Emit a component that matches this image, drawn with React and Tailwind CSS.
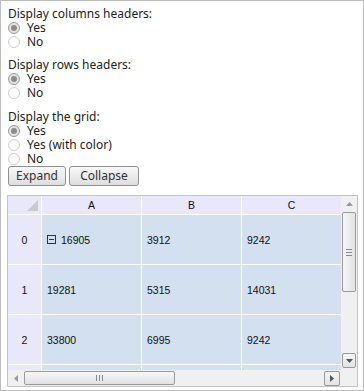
const groups = [
  { label: "Display columns headers:", options: ["Yes", "No"], mt: "" },
  { label: "Display rows headers:", options: ["Yes", "No"], mt: "mt-[9px]" },
  { label: "Display the grid:", options: ["Yes", "Yes (with color)", "No"], mt: "mt-[10px]" },
];

const rows = [
  { n: 0, a: "16905", b: "3912", c: "9242", toggle: true },
  { n: 1, a: "19281", b: "5315", c: "14031" },
  { n: 2, a: "33800", b: "6995", c: "9242" },
  { n: 3, a: "", b: "", c: "" },
];

function Radio({ checked, label }) {
  return (
    <div className="flex items-center h-[14px] leading-[14px]">
      {checked ? (
        <span className="w-[12px] h-[12px] rounded-full border border-[#9a9a9a] bg-[#e4e4e4] flex items-center justify-center">
          <span className="w-[6px] h-[6px] rounded-full bg-[#8c8c8c]" />
        </span>
      ) : (
        <span className="w-[12px] h-[12px] rounded-full border border-[#cfcfcf] bg-white" />
      )}
      <span className="ml-[7px]">{label}</span>
    </div>
  );
}

function Btn({ children, w }) {
  return (
    <button
      className={`${w} h-[20px] rounded-[3px] border border-[#8f8f8f] bg-gradient-to-b from-[#f8f8f8] to-[#dedede] text-[12px] text-[#333] leading-none`}
    >
      {children}
    </button>
  );
}

function Grip({ vertical }) {
  return vertical ? (
    <div className="flex flex-col gap-[2px]">
      <span className="w-[6px] h-px bg-[#8a8a8a]" />
      <span className="w-[6px] h-px bg-[#8a8a8a]" />
      <span className="w-[6px] h-px bg-[#8a8a8a]" />
    </div>
  ) : (
    <div className="flex gap-[2px]">
      <span className="h-[6px] w-px bg-[#8a8a8a]" />
      <span className="h-[6px] w-px bg-[#8a8a8a]" />
      <span className="h-[6px] w-px bg-[#8a8a8a]" />
    </div>
  );
}

function Cell({ children }) {
  return (
    <div className="w-[99px] h-full bg-[#d3e0ef] flex items-center pl-[5px] text-[#111]">
      {children}
    </div>
  );
}

export default function App() {
  return (
    <div
      className="w-[364px] h-[391px] border border-[#bdbdbd] bg-white overflow-hidden text-[12px] leading-[14px] text-[#222]"
      style={{ fontFamily: '"Noto Sans", "Open Sans", sans-serif' }}
    >
      <div className="pl-[7px] pt-[6px]">
        {groups.map((g) => (
          <div key={g.label} className={g.mt}>
            <div className="h-[14px] leading-[14px]">{g.label}</div>
            {g.options.map((o, i) => (
              <Radio key={o} checked={i === 0} label={o} />
            ))}
          </div>
        ))}
        <div className="flex gap-[3px]">
          <Btn w="w-[58px]">Expand</Btn>
          <Btn w="w-[70px]">Collapse</Btn>
        </div>
      </div>

      <div
        className="mt-[9px] ml-[6px] w-[351px] h-[192px] border border-[#c4c4c4] flex flex-col text-[10.5px] leading-[12px] overflow-hidden"
        style={{ fontFamily: '"Liberation Sans", Arial, sans-serif' }}
      >
        <div className="flex h-[174px]">
          <div className="w-[334px] flex flex-col gap-px overflow-hidden bg-white">
            <div className="flex gap-px h-[18px] shrink-0">
              <div className="w-[33px] h-full bg-[#e8e8fa] relative">
                <svg className="absolute right-[3px] bottom-[3px]" width="11" height="11" viewBox="0 0 11 11">
                  <polygon points="11,0 11,11 0,11" fill="#c9c9cf" />
                </svg>
              </div>
              {["A", "B", "C"].map((h) => (
                <div key={h} className="w-[99px] h-full bg-[#e8e8fa] flex items-center justify-center text-[#111]">
                  {h}
                </div>
              ))}
            </div>
            {rows.map((r) => (
              <div key={r.n} className="flex gap-px h-[49px] shrink-0">
                <div className="w-[33px] h-full bg-[#e8e8fa] flex items-center justify-center text-[#111]">
                  {r.n < 3 ? r.n : ""}
                </div>
                <Cell>
                  {r.toggle && (
                    <span className="w-[9px] h-[9px] border border-[#333] flex items-center justify-center mr-[5px]">
                      <span className="w-[5px] h-px bg-[#333]" />
                    </span>
                  )}
                  {r.a}
                </Cell>
                <Cell>{r.b}</Cell>
                <Cell>{r.c}</Cell>
              </div>
            ))}
          </div>
          <div className="w-[16px] h-full bg-[#f0f0f0] flex flex-col">
            <div className="h-[16px] flex items-center justify-center">
              <svg width="7" height="4" viewBox="0 0 7 4">
                <polygon points="0,4 7,4 3.5,0" fill="#9a9a9a" />
              </svg>
            </div>
            <div className="h-[80px] mx-px rounded-[2px] border border-[#9a9a9a] bg-gradient-to-r from-[#f6f6f6] to-[#e2e2e2] flex items-center justify-center">
              <Grip vertical />
            </div>
            <div className="flex-1" />
            <div className="h-[15px] mx-px mb-[2px] rounded-[2px] border border-[#9a9a9a] bg-gradient-to-b from-[#f6f6f6] to-[#e2e2e2] flex items-center justify-center">
              <svg width="7" height="4" viewBox="0 0 7 4">
                <polygon points="0,0 7,0 3.5,4" fill="#555" />
              </svg>
            </div>
          </div>
        </div>
        <div className="flex h-[16px]">
          <div className="w-[334px] h-full bg-[#f0f0f0] flex items-center">
            <div className="w-[16px] h-full flex items-center justify-center">
              <svg width="4" height="7" viewBox="0 0 4 7">
                <polygon points="4,0 4,7 0,3.5" fill="#9a9a9a" />
              </svg>
            </div>
            <div className="w-[151px] h-[14px] rounded-[2px] border border-[#9a9a9a] bg-gradient-to-b from-[#f6f6f6] to-[#e2e2e2] flex items-center justify-center">
              <Grip />
            </div>
            <div className="flex-1" />
            <div className="w-[16px] h-[15px] mr-px rounded-[2px] border border-[#9a9a9a] bg-gradient-to-b from-[#f6f6f6] to-[#e2e2e2] flex items-center justify-center">
              <svg width="4" height="7" viewBox="0 0 4 7">
                <polygon points="0,0 0,7 4,3.5" fill="#555" />
              </svg>
            </div>
          </div>
          <div className="w-[16px] h-full bg-[#f0f0f0]" />
        </div>
      </div>
    </div>
  );
}
